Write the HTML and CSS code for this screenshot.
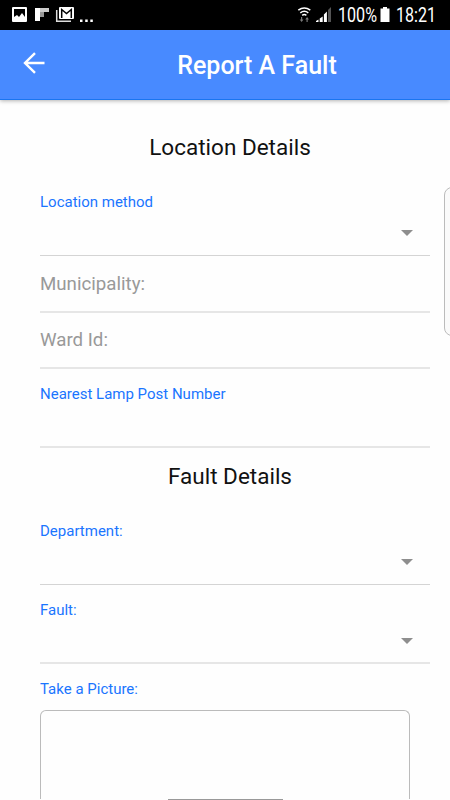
FILE: index.html
```html
<!DOCTYPE html>
<html lang="en">
<head>
    <meta charset="UTF-8">
    <meta name="viewport" content="width=device-width, initial-scale=1.0">
    <title>Report A Fault</title>
    <link rel="stylesheet" href="styles.css">
</head>
<body>

<div class="status-bar">
    <svg class="status-icons" width="100" height="30" viewBox="0 0 100 30">
        <!-- gallery -->
        <path fill="#fff" fill-rule="evenodd" d="M13 7h13a1 1 0 0 1 1 1v13a1 1 0 0 1-1 1H13a1 1 0 0 1-1-1V8a1 1 0 0 1 1-1zM14 9v8l3-2 2 2 3-4 3 4V9z"/>
        <!-- flipboard -->
        <path fill="#fff" d="M35 8h5v13h-5z"/>
        <path fill="#ccc" d="M40 8h9v4h-9z"/>
        <path fill="#999" d="M40 12h4v5h-4z"/>
        <!-- mail -->
        <path fill="none" stroke="#ddd" stroke-width="1.5" d="M56.7 10v11.3H71"/>
        <rect x="59" y="7" width="15" height="12" rx="1" fill="#fff"/>
        <path fill="none" stroke="#000" stroke-width="1.5" d="M61.7 18V9.5l4.8 4 4.8-4V18"/>
        <path fill="#fff" d="M80 19.500h2.500V22H80zM85.200 19.500h2.500V22h-2.500zM90.300 19.500h2.500V22h-2.500z"/>
    </svg>
    <svg class="status-icons" width="150" height="30" viewBox="300 0 150 30">
        <!-- wifi -->
        <g fill="none" stroke="#fff" stroke-width="1.500">
            <path d="M298.300 10.200q6-4.600 12 0M300.300 12.900q4-3.200 8 0M302.200 15.400q2.100-1.600 4.200 0"/>
        </g>
        <path fill="#777" d="M301 17h1.200v2.500h1.300L301.600 22l-1.900-2.500h1.300zM306.500 22h1.200v-2.500h1.300L307.100 17l-1.900 2.500h1.300z"/>
        <!-- signal -->
        <path fill="#fff" d="M316 22v-1l2.500-1.500V22zM319.700 22v-3.500l3-2V22zM323.900 22v-7.500l3-3V22z"/>
        <path fill="#555" d="M328 22V10l3-3v15z"/>
        <text class="status-text" x="338" y="22" textLength="39" lengthAdjust="spacingAndGlyphs">100%</text>
        <!-- battery -->
        <path fill="#fff" d="M383 7h4v1.500h2.500V22h-9V8.500h2.500z"/>
        <text class="status-text" x="396" y="22" textLength="40" lengthAdjust="spacingAndGlyphs">18:21</text>
    </svg>
</div>

<div class="header">
    <svg class="back" width="24" height="24" viewBox="0 0 24 24">
        <path d="M22.500 12H3M13 2.200L3 12l10 9.800" fill="none" stroke="#fff" stroke-width="2.400"/>
    </svg>
    <h1>Report A Fault</h1>
</div>

<form class="content">
    <h2>Location Details</h2>
    <div class="field select">
        <label>Location method</label>
        <span class="arrow"></span>
    </div>
    <div class="field inline first">Municipality:</div>
    <div class="field inline">Ward Id:</div>
    <div class="field soft">
        <label>Nearest Lamp Post Number</label>
    </div>

    <h2 class="fault-title">Fault Details</h2>
    <div class="field select">
        <label>Department:</label>
        <span class="arrow"></span>
    </div>
    <div class="field select last">
        <label>Fault:</label>
        <span class="arrow"></span>
    </div>
    <label class="picture-label">Take a Picture:</label>
    <div class="picture"></div>
</form>

<div class="edge-panel"></div>
<div class="home-handle"></div>

</body>
</html>
```
FILE: styles.css
```css
body {
    font-family: Roboto, sans-serif;
    background-color: #fefefe;
    margin: 0;
    height: 800px;
    overflow: hidden;
    position: relative;
}
.status-bar {
    display: flex;
    justify-content: space-between;
    height: 30px;
    background-color: #000;
}
.status-icons {
    display: block;
    overflow: visible;
}
.status-text {
    fill: #fff;
    font-size: 20px;
}
.header {
    display: flex;
    align-items: center;
    height: 70px;
    box-sizing: border-box;
    padding-left: 22px;
    background-color: #488aff;
    border-bottom: 1px solid #1a75f0;
    box-shadow: 0 1px 4px rgba(0, 0, 0, 0.3);
}
.back {
    margin-top: -3px;
}
h1 {
    flex: 1;
    margin: 0 44px 0 -22px;
    padding: 2px 0 0 84px;
    text-align: center;
    font-size: 25px;
    font-weight: 500;
    color: #fff;
}
.content {
    padding: 0 20px 0 40px;
}
h2 {
    margin: 0 10px 0 0;
    padding-top: 34px;
    height: 46px;
    line-height: 27px;
    text-align: center;
    font-size: 22.5px;
    font-weight: 400;
    color: #111;
}
.fault-title {
    padding-top: 15px;
    height: 46px;
}
.field {
    position: relative;
    height: 79px;
    box-sizing: border-box;
    padding-top: 16px;
    border-bottom: 1px solid #d4d4d4;
}
h2 + .field.select {
    height: 76px;
    padding-top: 13px;
}
label {
    display: block;
    line-height: 18px;
    font-size: 15px;
    color: #1a75ff;
}
.field.inline {
    height: 56px;
    padding-top: 16px;
    line-height: 22px;
    font-size: 18.7px;
    color: #999;
}
.field.inline.first {
    height: 57px;
    padding-top: 17px;
}
.field.inline,
.field.soft,
.field.last {
    border-bottom: 2px solid #e6e6e6;
}
.arrow {
    position: absolute;
    right: 17px;
    bottom: 19px;
    border: 6px solid transparent;
    border-top-color: #8e8e8e;
    border-bottom: none;
}
.last .arrow {
    bottom: 18px;
}
.picture-label {
    padding-top: 16px;
}
.picture {
    margin: 12px 20px 0 0;
    height: 88px;
    border: 1px solid #bbb;
    border-bottom: none;
    border-radius: 6px 6px 0 0;
}
.edge-panel {
    position: absolute;
    top: 187px;
    right: -10px;
    width: 14px;
    height: 147px;
    border: 1px solid #bbb;
    border-radius: 8px;
    background-color: #fafafa;
}
.home-handle {
    position: absolute;
    left: 168px;
    top: 799px;
    width: 115px;
    height: 1px;
    background-color: #999;
}
```
